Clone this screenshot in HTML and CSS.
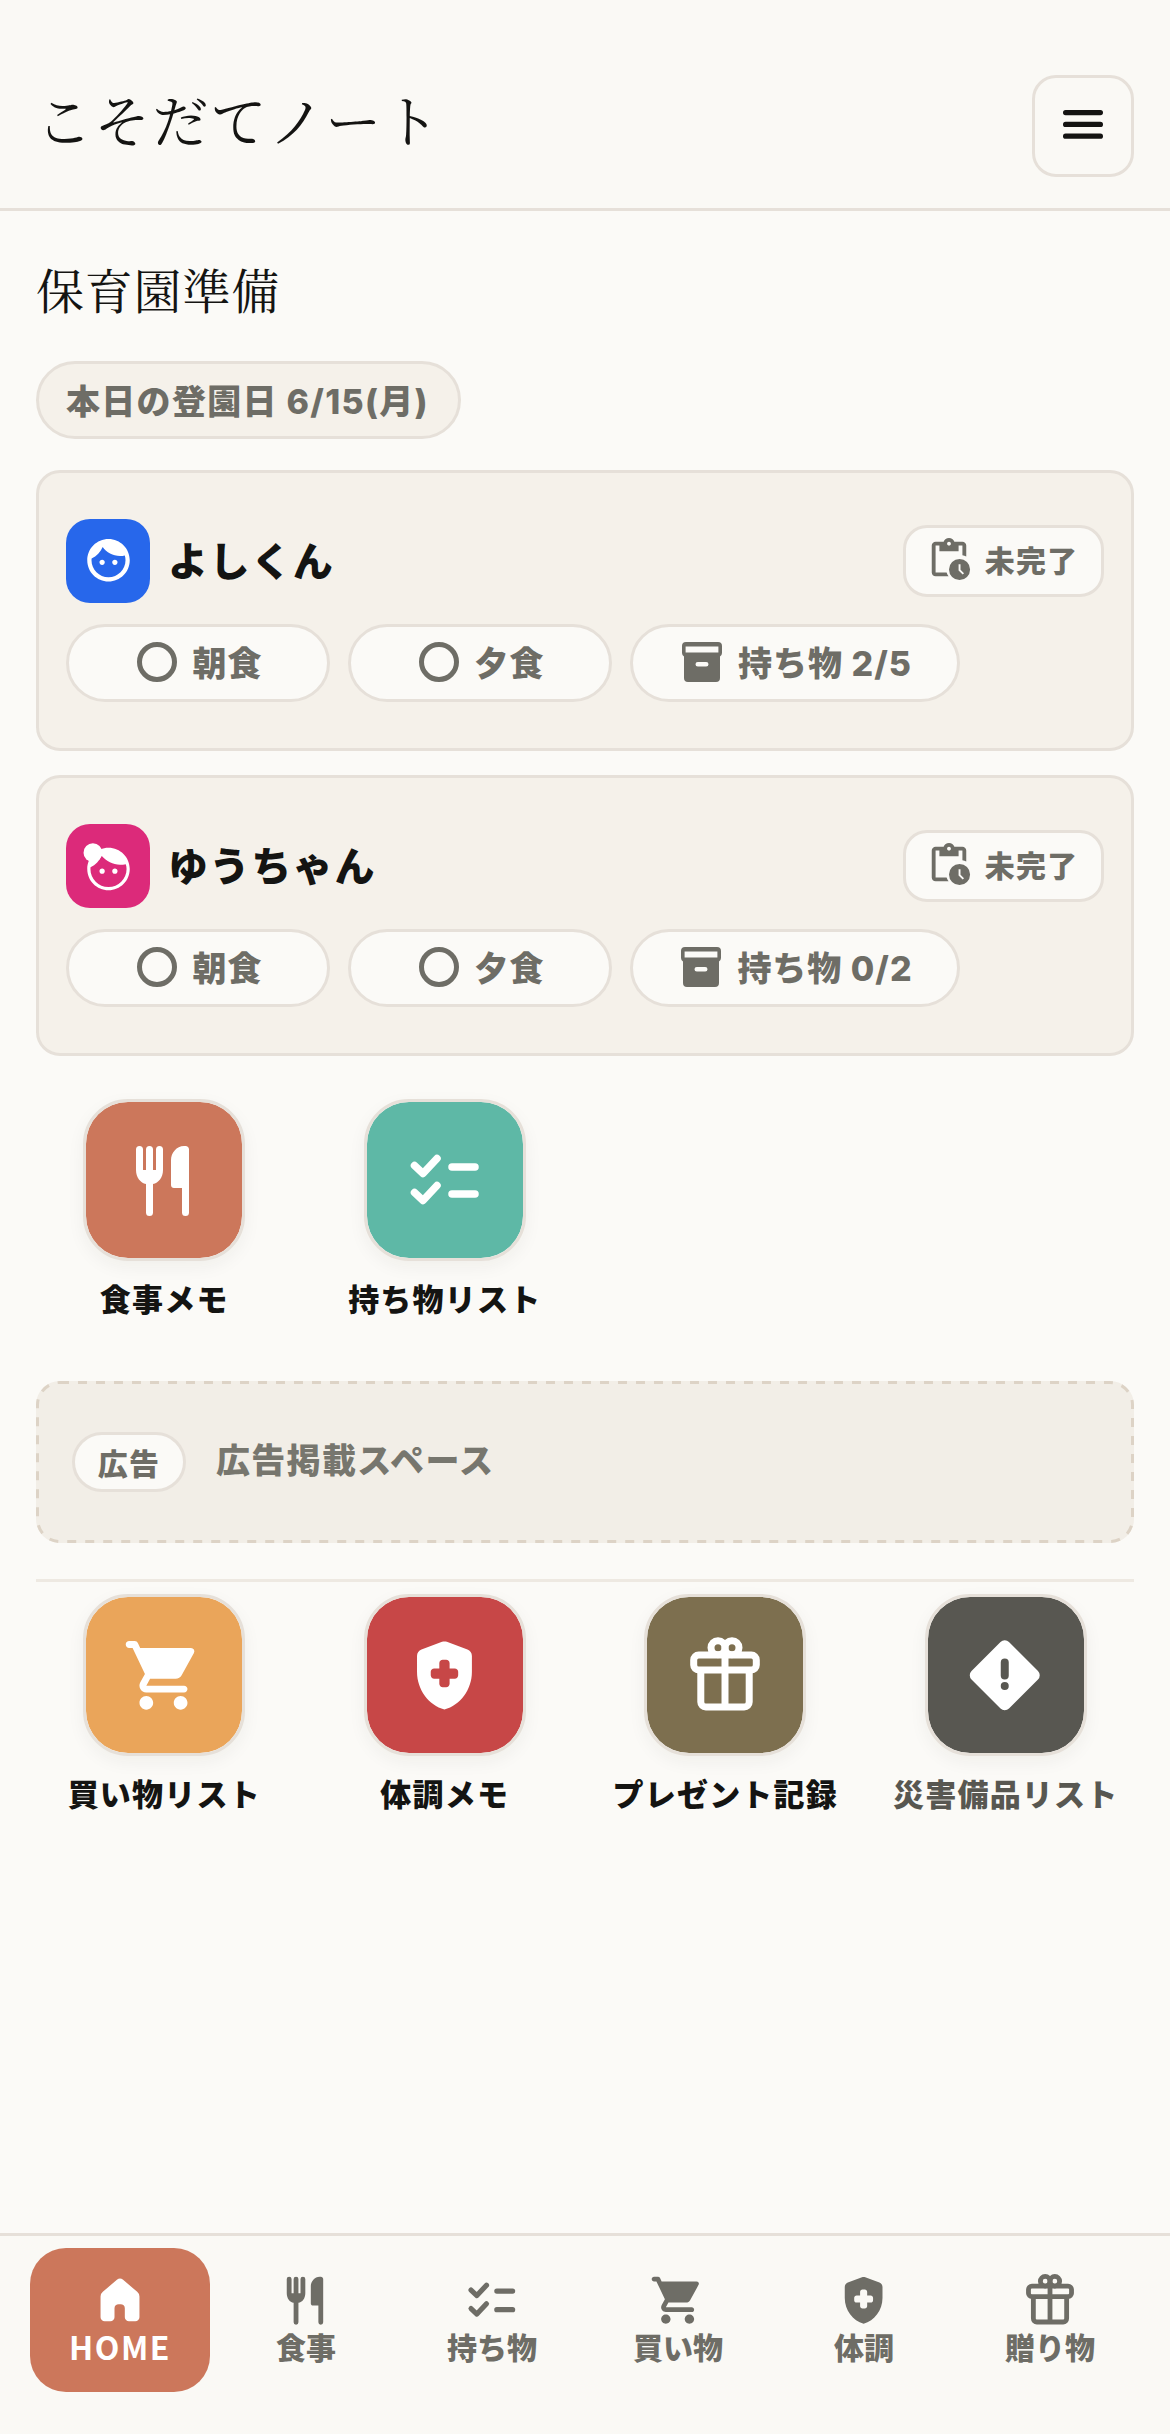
FILE: index.html
```html
<!DOCTYPE html>
<html lang="ja">
<head>
<meta charset="utf-8">
<title>こそだてノート</title>
<link rel="stylesheet" href="styles.css">
</head>
<body>
<svg class="sprites" width="0" height="0" aria-hidden="true">
  <defs>
    <symbol id="i-menu" viewBox="0 0 40 29"><rect x="0" y="0" width="40" height="5.200" rx="2.600"/><rect x="0" y="11.800" width="40" height="5.200" rx="2.600"/><rect x="0" y="23.600" width="40" height="5.200" rx="2.600"/></symbol>
    <symbol id="i-food" viewBox="0 0 96 96"><g transform="translate(19 14)"><path d="M1 3.500a3.500 3.500 0 0 1 7 0V24h3V3.500a3.500 3.500 0 0 1 7 0V24h3V3.500a3.500 3.500 0 0 1 7 0V24c0 7.500-4.500 13-10 14V66.500a3.500 3.500 0 0 1-7 0V38C5.500 37 1 31.500 1 24z"/><path d="M36 14c0-7 5.500-14 13-14h1.500c2 0 3.500 1.500 3.500 3.500V66.500a3.500 3.500 0 0 1-7 0V42H39c-1.700 0-3-1.300-3-3z"/></g></symbol>
    <symbol id="i-check" viewBox="0 0 96 96"><g fill="none" stroke="currentColor" stroke-width="7.500" stroke-linecap="round" stroke-linejoin="round"><path d="M17.500 33.500 26 41.500 40 26.500"/><path d="M17.500 60.500 26 68.500 40 53.500"/><path d="M55 35H78"/><path d="M55 62H78"/></g></symbol>
    <symbol id="i-cart" viewBox="0 0 96 96"><path transform="translate(6.300 7.200) scale(3.430)" d="M7 18c-1.100 0-1.990.9-1.990 2S5.900 22 7 22s2-.9 2-2-.9-2-2-2zM1 3c0 .55.45 1 1 1h1l3.600 7.590-1.350 2.440C4.520 15.370 5.480 17 7 17h11c.55 0 1-.45 1-1s-.45-1-1-1H7l1.100-2h7.450c.75 0 1.410-.41 1.750-1.030l3.580-6.490A.996.996 0 0 0 20.010 4H5.210l-.67-1.430a.993.993 0 0 0-.9-.57H2c-.55 0-1 .45-1 1zm16 15c-1.100 0-1.990.9-1.990 2s.89 2 1.990 2 2-.9 2-2-.9-2-2-2z"/></symbol>
    <symbol id="i-shield" viewBox="0 0 96 96"><path transform="translate(6.300 7.100) scale(3.430)" fill-rule="evenodd" d="M12.700 2.250c-.45-.17-.95-.17-1.400 0l-6 2.250C4.520 4.790 4 5.540 4 6.370v4.710c0 5.050 3.410 9.760 8 10.920 4.590-1.160 8-5.870 8-10.920V6.370c0-.83-.52-1.580-1.300-1.870zM10.500 8.500c0-.55.45-1 1-1h1c.55 0 1 .45 1 1v1.500h1.500c.55 0 1 .45 1 1v1c0 .55-.45 1-1 1h-1.500v1.500c0 .55-.45 1-1 1h-1c-.55 0-1-.45-1-1v-1.500H9c-.55 0-1-.45-1-1v-1c0-.55.45-1 1-1h1.500z"/></symbol>
    <symbol id="i-gift" viewBox="0 0 96 96"><g fill="none" stroke="currentColor" stroke-width="7" stroke-linejoin="round"><circle cx="41" cy="20.700" r="7"/><circle cx="55" cy="20.700" r="7"/><rect x="16.700" y="27.900" width="62.600" height="15.100" rx="5"/><path d="M23.800 43V75a5 5 0 0 0 5 5H67.200a5 5 0 0 0 5-5V43"/><path d="M48 27.900V80"/></g></symbol>
    <symbol id="i-warn" viewBox="0 0 96 96"><path fill-rule="evenodd" d="M42.510 15.060A6 6 0 0 1 50.990 15.060L79.990 44.060A6 6 0 0 1 79.990 52.540L50.990 81.540A6 6 0 0 1 42.510 81.540L13.510 52.540A6 6 0 0 1 13.510 44.060zM42.750 35.600a4 4 0 0 1 8 0v13a4 4 0 0 1-8 0zM46.750 55a4 4 0 1 1 0 8a4 4 0 1 1 0-8z"/></symbol>
    <symbol id="i-home" viewBox="0 0 96 96"><path d="M43.500 18.700a7 7 0 0 1 9 0L73 36a9 9 0 0 1 3.300 7V73a6 6 0 0 1-6 6H61a6 6 0 0 1-6-6V60a6 6 0 0 0-6-6H46a6 6 0 0 0-6 6V73a6 6 0 0 1-6 6H25.700a6 6 0 0 1-6-6V43a9 9 0 0 1 3.300-7z"/></symbol>
    <symbol id="i-clip" viewBox="0 0 24 24"><path d="M19 3h-4.180C14.400 1.840 13.300 1 12 1s-2.400.84-2.820 2H5c-1.100 0-2 .9-2 2v14c0 1.100.9 2 2 2h6.810a6.600 6.600 0 0 1-1.060-2H5V5h2v3h10V5h2v5.080c.71.1 1.380.31 2 .62V5c0-1.100-.9-2-2-2zm-7 2c-.55 0-1-.45-1-1s.45-1 1-1 1 .45 1 1-.45 1-1 1z"/><path d="M17.500 12a5.500 5.500 0 1 0 0 11 5.500 5.500 0 0 0 0-11zm1.650 8.100-2.150-2.150V14.700h1v2.850l1.850 1.850z"/></symbol>
    <symbol id="i-archive" viewBox="0 0 24 24"><path fill-rule="evenodd" d="M4 2h16a2 2 0 0 1 2 2v3.500a2 2 0 0 1-1 1.730V20a2 2 0 0 1-2 2H5a2 2 0 0 1-2-2V9.230A2 2 0 0 1 2 7.500V4a2 2 0 0 1 2-2zM3.800 4.300v3h16.400v-3zM9.900 12a1.150 1.150 0 0 0 0 2.300h4.200a1.150 1.150 0 0 0 0-2.300z"/></symbol>
    <symbol id="i-boy" viewBox="0 0 24 24"><path transform="translate(0 -.6)" d="M9 11.750c-.69 0-1.250.56-1.250 1.250s.56 1.250 1.250 1.250 1.250-.56 1.250-1.250-.56-1.250-1.250-1.250zm6 0c-.69 0-1.250.56-1.250 1.250s.56 1.250 1.250 1.250 1.250-.56 1.250-1.250-.56-1.250-1.250-1.250zM12 2C6.480 2 2 6.480 2 12s4.480 10 10 10 10-4.480 10-10S17.520 2 12 2zm0 18c-4.410 0-8-3.590-8-8 0-.29.02-.58.05-.86 2.360-1.050 4.230-2.980 5.210-5.370C11.070 8.330 14.050 10 17.420 10c.78 0 1.530-.09 2.250-.26.21.71.33 1.470.33 2.260 0 4.410-3.590 8-8 8z"/></symbol>
    <symbol id="i-girl" viewBox="0 0 24 24"><g transform="translate(0 1.200)"><path d="M9 11.750c-.69 0-1.250.56-1.250 1.250s.56 1.250 1.250 1.250 1.250-.56 1.250-1.250-.56-1.250-1.250-1.250zm6 0c-.69 0-1.250.56-1.250 1.250s.56 1.250 1.250 1.250 1.250-.56 1.250-1.250-.56-1.250-1.250-1.250zM12 2C6.480 2 2 6.480 2 12s4.480 10 10 10 10-4.480 10-10S17.520 2 12 2zm0 18.500c-4.690 0-8.500-3.810-8.500-8.500 0-.29.02-.58.05-.86 2.360-1.050 4.230-2.980 5.210-5.370C11.070 8.330 14.050 10 17.420 10c.78 0 1.980-.09 2.700-.26.25.71.38 1.470.38 2.260 0 4.690-3.810 8.500-8.500 8.500z"/><circle cx="4.650" cy="4.300" r="4.400"/></g></symbol>
  </defs>
</svg>

<div class="app">
  <header class="topbar">
    <h1 class="brand">こそだてノート</h1>
    <button class="menu-btn" aria-label="メニュー"><svg class="icon-menu"><use href="#i-menu"/></svg></button>
  </header>

  <main class="content">
    <h2 class="page-title">保育園準備</h2>
    <div class="date-pill">本日の登園日 6/15(月)</div>

    <section class="child-card">
      <div class="child-head">
        <div class="avatar avatar-blue"><svg class="avatar-icon"><use href="#i-boy"/></svg></div>
        <div class="child-name">よしくん</div>
        <div class="status-pill"><svg class="status-icon"><use href="#i-clip"/></svg>未完了</div>
      </div>
      <div class="chips">
        <div class="chip chip-meal"><span class="ring"></span>朝食</div>
        <div class="chip chip-meal"><span class="ring"></span>夕食</div>
        <div class="chip chip-items"><svg class="chip-icon"><use href="#i-archive"/></svg>持ち物 2/5</div>
      </div>
    </section>

    <section class="child-card">
      <div class="child-head">
        <div class="avatar avatar-pink"><svg class="avatar-icon"><use href="#i-girl"/></svg></div>
        <div class="child-name">ゆうちゃん</div>
        <div class="status-pill"><svg class="status-icon"><use href="#i-clip"/></svg>未完了</div>
      </div>
      <div class="chips">
        <div class="chip chip-meal"><span class="ring"></span>朝食</div>
        <div class="chip chip-meal"><span class="ring"></span>夕食</div>
        <div class="chip chip-items"><svg class="chip-icon"><use href="#i-archive"/></svg>持ち物 0/2</div>
      </div>
    </section>

    <div class="tile-grid tile-grid-top">
      <a class="tile"><span class="tile-box bg-food"><svg class="tile-icon"><use href="#i-food"/></svg></span><span class="tile-label">食事メモ</span></a>
      <a class="tile"><span class="tile-box bg-check"><svg class="tile-icon"><use href="#i-check"/></svg></span><span class="tile-label">持ち物リスト</span></a>
    </div>

    <div class="ad">
      <svg class="ad-outline" viewBox="0 0 1098 162"><rect x="1.500" y="1.500" width="1095" height="159" rx="22.500"/></svg>
      <span class="ad-badge">広告</span>
      <span class="ad-text">広告掲載スペース</span>
    </div>

    <div class="tile-grid tile-grid-bottom">
      <a class="tile"><span class="tile-box bg-cart"><svg class="tile-icon"><use href="#i-cart"/></svg></span><span class="tile-label">買い物リスト</span></a>
      <a class="tile"><span class="tile-box bg-health"><svg class="tile-icon"><use href="#i-shield"/></svg></span><span class="tile-label">体調メモ</span></a>
      <a class="tile"><span class="tile-box bg-gift"><svg class="tile-icon"><use href="#i-gift"/></svg></span><span class="tile-label">プレゼント記録</span></a>
      <a class="tile"><span class="tile-box bg-warn"><svg class="tile-icon"><use href="#i-warn"/></svg></span><span class="tile-label label-muted">災害備品リスト</span></a>
    </div>
  </main>

  <nav class="bottom-nav">
    <a class="nav-item nav-active"><svg class="nav-icon"><use href="#i-home"/></svg><span>HOME</span></a>
    <a class="nav-item"><svg class="nav-icon"><use href="#i-food"/></svg><span>食事</span></a>
    <a class="nav-item"><svg class="nav-icon"><use href="#i-check"/></svg><span>持ち物</span></a>
    <a class="nav-item"><svg class="nav-icon"><use href="#i-cart"/></svg><span>買い物</span></a>
    <a class="nav-item"><svg class="nav-icon"><use href="#i-shield"/></svg><span>体調</span></a>
    <a class="nav-item"><svg class="nav-icon"><use href="#i-gift"/></svg><span>贈り物</span></a>
  </nav>
</div>
</body>
</html>
```
FILE: styles.css
```css
* { box-sizing: border-box; }
html, body { margin: 0; padding: 0; }
body {
  background: #fbfaf7;
  color: #141412;
  font-family: "Inter", "Noto Sans CJK JP", sans-serif;
}
.sprites { position: absolute; }
.app { width: 1170px; height: 2434px; display: flex; flex-direction: column; }

.topbar {
  height: 211px;
  flex: none;
  padding: 75px 36px 0;
  display: flex;
  justify-content: space-between;
  align-items: flex-start;
  background: #faf9f5;
  border-bottom: 3px solid #e6e0d9;
}
.brand {
  margin: -3px 0 0;
  font-family: "Noto Serif CJK JP", "Liberation Serif", "Noto Sans CJK JP", serif;
  font-weight: 400;
  font-size: 56px;
  line-height: 92px;
  letter-spacing: 2.2px;
}
.menu-btn {
  width: 102px;
  height: 102px;
  border: 3px solid #e6e0d9;
  border-radius: 24px;
  background: #faf9f5;
  padding: 0;
  display: flex;
  align-items: center;
  justify-content: center;
  color: #141412;
}
.icon-menu { width: 40px; height: 29px; fill: currentColor; transform: translateY(-2px); }

.content { flex: 1; padding: 0 36px; display: flex; flex-direction: column; }
.page-title {
  margin: 43px 0 0;
  font-family: "Noto Serif CJK JP", "Liberation Serif", "Noto Sans CJK JP", serif;
  font-weight: 400;
  font-size: 48px;
  line-height: 70px;
  height: 70px;
  letter-spacing: .8px;
}
.date-pill {
  align-self: flex-start;
  margin-top: 37px;
  height: 78px;
  padding: 0 29px 0 27px;
  border: 3px solid #e6e0d9;
  border-radius: 39px;
  background: #f5f1ea;
  color: #6e6d66;
  font-weight: 800;
  font-size: 34px;
  letter-spacing: 1.3px;
  line-height: 76px;
  white-space: nowrap;
}

.child-card {
  margin-top: 31px;
  height: 281px;
  border: 3px solid #e6e0d9;
  border-radius: 24px;
  background: #f5f1ea;
  padding: 46px 27px 0;
}
.child-card + .child-card { margin-top: 24px; }
.child-head { display: flex; align-items: center; height: 84px; }
.avatar {
  width: 84px;
  height: 84px;
  border-radius: 24px;
  display: flex;
  align-items: center;
  justify-content: center;
  flex: none;
}
.avatar-blue { background: #2767eb; }
.avatar-pink { background: #dc2a7a; }
.avatar-icon { width: 51px; height: 51px; fill: #fff; overflow: visible; }
.child-name { margin-left: 18px; padding-bottom: 5px; font-weight: 900; font-size: 40px; letter-spacing: 1.6px; color: #141412; flex: 1; }
.status-pill {
  width: 201px;
  height: 72px;
  padding: 0 3px 5px 0;
  border: 3px solid #e6e0d9;
  border-radius: 24px;
  background: #fbfaf7;
  color: #6e6d66;
  font-weight: 900;
  font-size: 30px;
  letter-spacing: 1.2px;
  display: flex;
  align-items: center;
  justify-content: center;
  gap: 13px;
}
.status-icon { width: 46px; height: 46px; fill: #6e6d66; }
.chips { display: flex; gap: 18px; margin-top: 21px; }
.chip {
  height: 78px;
  padding-bottom: 3px;
  border: 3px solid #e6e0d9;
  border-radius: 39px;
  background: #fbfaf7;
  color: #6e6d66;
  font-weight: 800;
  font-size: 34px;
  letter-spacing: 1px;
  display: flex;
  align-items: center;
  justify-content: center;
  gap: 16px;
}
.chip-meal { width: 264px; padding-left: 3px; }
.chip-items { width: 330px; gap: 12px; }
.ring { width: 40px; height: 40px; border: 5px solid #6e6d66; border-radius: 50%; }
.chip-icon { width: 48px; height: 48px; fill: #6e6d66; }

.tile-grid { display: grid; grid-template-columns: repeat(4, 1fr); gap: 0 24px; }
.tile-grid-top { margin-top: 43px; height: 234px; }
.tile-grid-bottom { padding-top: 12px; border-top: 3px solid #eee9e2; }
.tile {
  display: flex;
  flex-direction: column;
  align-items: center;
  text-decoration: none;
}
.tile-box {
  width: 162px;
  height: 162px;
  border: 3px solid #e6e0d9;
  border-radius: 45px;
  background-clip: padding-box;
  display: flex;
  align-items: center;
  justify-content: center;
  box-shadow: 0 6px 18px rgba(40, 30, 20, 0.05);
  color: #fff;
}
.bg-food { background-color: #cc775b; }
.bg-check { background-color: #5eb8a6; }
.bg-cart { background-color: #eaa55a; }
.bg-health { background-color: #c74747; }
.bg-gift { background-color: #7d6f4f; }
.bg-warn { background-color: #585751; }
.tile-icon { width: 96px; height: 96px; fill: currentColor; }
.tile-label {
  margin-top: 15px;
  font-weight: 900;
  font-size: 31px;
  letter-spacing: 1.2px;
  line-height: 48px;
  white-space: nowrap;
  color: #141412;
}
.label-muted { color: #585751; }

.ad {
  position: relative;
  margin-top: 48px;
  margin-bottom: 36px;
  height: 162px;
  border-radius: 24px;
  background: #f2eee7;
  padding: 0 36px;
  display: flex;
  align-items: center;
  gap: 30px;
}
.ad-outline { position: absolute; inset: 0; width: 100%; height: 100%; }
.ad-outline rect { fill: none; stroke: #ddd3c6; stroke-width: 3; stroke-dasharray: 9 9; }
.ad-badge {
  height: 60px;
  width: 114px;
  border: 3px solid #e6e0d9;
  border-radius: 30px;
  background: #fbfaf7;
  color: #6e6d66;
  font-weight: 900;
  font-size: 30px;
  letter-spacing: 1.2px;
  display: flex;
  align-items: center;
  justify-content: center;
}
.ad-text { color: #77766e; font-weight: 900; font-size: 34px; letter-spacing: 1.3px; line-height: 40px; margin-top: -2px; }

.bottom-nav {
  height: 201px;
  flex: none;
  background: #faf9f5;
  border-top: 3px solid #e6e0d9;
  padding: 12px 30px 0;
  display: grid;
  grid-template-columns: repeat(6, 1fr);
  column-gap: 6px;
  align-items: start;
  font-family: "Noto Sans CJK JP", sans-serif;
}
.nav-item {
  height: 144px;
  border-radius: 36px;
  display: flex;
  flex-direction: column;
  align-items: center;
  padding-top: 19px;
  color: #6e6d66;
  font-weight: 900;
  font-size: 30px;
  line-height: 40px;
}
.nav-active { background: #cc775b; color: #fff; font-size: 32px; letter-spacing: 1.5px; font-weight: 700; }
.nav-icon { width: 66px; height: 66px; flex: none; fill: currentColor; margin-bottom: -7px; }
```
